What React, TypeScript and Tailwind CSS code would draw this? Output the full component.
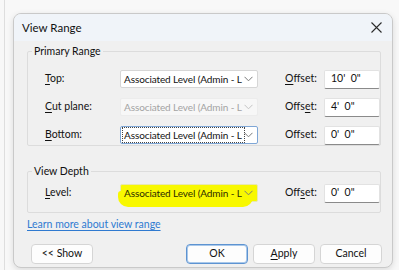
import React from "react";

const font = { fontFamily: 'Lato, "Noto Sans", Arial, sans-serif' };

const Chevron = ({ faded = false }: { faded?: boolean }) => (
  <svg width="9" height="6" viewBox="0 0 9 6" className="shrink-0">
    <path d="M0.5 0.8 L4.5 4.8 L8.5 0.8" fill="none" stroke={faded ? "#c4c4c4" : "#7a7a7a"} strokeWidth="1" />
  </svg>
);

type SelectProps = { variant?: "normal" | "disabled" | "focused" | "highlight" };

const LevelSelect = ({ variant = "normal" }: SelectProps) => {
  const base = "relative flex items-center w-[138px] h-[18px] pl-[2px] pr-[4px] rounded-[2px] border";
  const styles: Record<string, string> = {
    normal: "bg-white border-[#d6d6d6] text-[#111]",
    disabled: "bg-[#f7f7f7] border-[#ececec] text-[#a3a3a3]",
    focused: "bg-white border-[#7ea6d6] text-[#111]",
    highlight: "bg-[#f8f800] border-[#e8e8b0] text-[#2a2a00]",
  };
  return (
    <div className={`${base} ${styles[variant]}`}>
      {variant === "highlight" && (
        <div className="absolute left-[-3px] right-[4px] top-[6px] bottom-[-6px] bg-[#f8f800] rounded-b-[10px] rounded-t-[3px]" />
      )}
      <span
        className={`relative w-[121px] shrink-0 pl-[1px] whitespace-nowrap overflow-hidden text-[10px] tracking-[-0.1px] leading-[14px] ${
          variant === "focused" ? "outline outline-1 outline-dotted outline-[#444]" : ""
        }`}
      >
        Associated Level (Admin - L
      </span>
      <span className="flex-1" />
      <span className="relative">
        <Chevron faded={variant === "disabled"} />
      </span>
    </div>
  );
};

const OffsetInput = ({ value }: { value: string }) => (
  <div className="flex items-center w-[56px] h-[19px] pl-[6px] bg-white border border-[#e2e2e2] border-b-[#8a8a8a] rounded-[2px] text-[#111] whitespace-pre">
    {value}
  </div>
);

const Row = ({
  label,
  offset,
  value,
  variant,
}: {
  label: React.ReactNode;
  offset: React.ReactNode;
  value: string;
  variant?: SelectProps["variant"];
}) => (
  <div className="flex items-center h-[18px]">
    <div className="w-[92px] pl-[17px] whitespace-nowrap">{label}</div>
    <LevelSelect variant={variant} />
    <div className="w-[39px] ml-[27px] whitespace-nowrap">{offset}</div>
    <OffsetInput value={value} />
  </div>
);

const U = ({ children }: { children: React.ReactNode }) => (
  <span className="underline underline-offset-[2px] decoration-1">{children}</span>
);

const Button = ({ children, primary = false }: { children: React.ReactNode; primary?: boolean }) => (
  <div
    className={`flex items-center justify-center w-[62px] h-[20px] rounded-[4px] bg-[#fdfdfd] text-[#111] ${
      primary ? "border border-[#5d93d1] shadow-[inset_0_0_0_1px_#a9c8ea]" : "border border-[#d5d5d5]"
    }`}
  >
    {children}
  </div>
);

export default function App() {
  return (
    <div className="w-[399px] h-[270px] overflow-hidden bg-[#f8f8f8] pl-[4px] text-[10.5px]" style={font}>
      <div className="h-full border-l border-[#dedede] pl-[8px] pt-[13px]">
        <div className="w-[380px] h-[255px] rounded-[8px] border border-[#c9c9c9] bg-[#f0f0f0] overflow-hidden shadow-[0_2px_6px_rgba(0,0,0,0.12)] flex flex-col">
          <div className="h-[27px] shrink-0 bg-[#f0f4f9] flex items-center justify-between pl-[8px] pr-[10px] text-[#111] text-[11.5px]">
            <span>View Range</span>
            <svg width="11" height="11" viewBox="0 0 11 11">
              <path d="M0.5 0.5 L10.5 10.5 M10.5 0.5 L0.5 10.5" stroke="#2b2b2b" strokeWidth="1.1" />
            </svg>
          </div>

          <div className="flex flex-col px-[13px] pt-[2px] text-[#111]">
            <fieldset className="border border-[#dcdcdc] rounded-[2px] pb-[1px]">
              <legend className="ml-[4px] px-[2px] leading-[16px]">Primary Range</legend>
              <div className="flex flex-col gap-[10px] pt-[11px]">
                <Row label={<><U>T</U>op:</>} offset={<><U>O</U>ffset:</>} value={"10'  0\""} />
                <Row
                  label={<><U>C</U>ut plane:</>}
                  offset={<>Offs<U>e</U>t:</>}
                  value={"4'  0\""}
                  variant="disabled"
                />
                <Row
                  label={<><U>B</U>ottom:</>}
                  offset={<>Of<U>f</U>set:</>}
                  value={"0'  0\""}
                  variant="focused"
                />
              </div>
            </fieldset>

            <fieldset className="mt-[17px] border border-[#dcdcdc] rounded-[2px] pb-[10px]">
              <legend className="ml-[4px] px-[2px] leading-[16px]">View Depth</legend>
              <div className="pt-[5px]">
                <Row
                  label={<><U>L</U>evel:</>}
                  offset={<>Off<U>s</U>et:</>}
                  value={"0'  0\""}
                  variant="highlight"
                />
              </div>
            </fieldset>

            <div className="mt-[3px] leading-[16px]">
              <span className="text-[#2f7ad0] underline underline-offset-[2px]">Learn more about view range</span>
            </div>

            <div className="mt-[12px] flex items-center pl-[4px]">
              <Button>&lt;&lt; Show</Button>
              <div className="flex-1" />
              <div className="flex gap-[5px] mr-[-3px]">
                <Button primary>OK</Button>
                <Button>
                  <U>A</U>pply
                </Button>
                <Button>Cancel</Button>
              </div>
            </div>
          </div>
        </div>
      </div>
    </div>
  );
}
